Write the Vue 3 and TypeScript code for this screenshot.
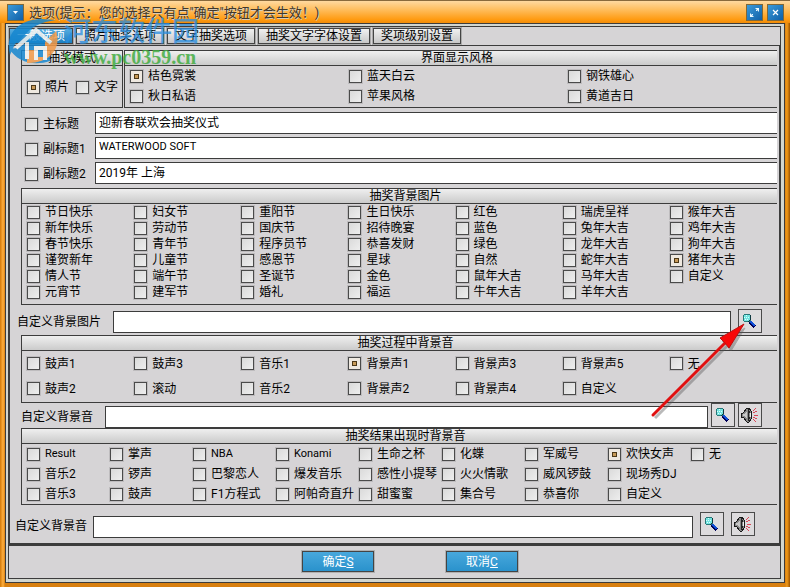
<script setup lang="ts">
import { ref } from 'vue'

interface RadioGroup {
  name: string
  title: string
  layout: string
  options: string[]
}

const tabs: string[] = ['一般选项', '照片抽奖选项', '文字抽奖选项', '抽奖文字字体设置', '奖项级别设置']
const activeTab = ref(0)

const modes: string[] = ['照片', '文字']
const styles: string[] = ['桔色霓裳', '蓝天白云', '钢铁雄心', '秋日私语', '苹果风格', '黄道吉日']

const titles = ref([
  { id: 'main', label: '主标题', value: '迎新春联欢会抽奖仪式', shown: false },
  { id: 'sub1', label: '副标题1', value: 'WATERWOOD SOFT', shown: false },
  { id: 'sub2', label: '副标题2', value: '2019年 上海', shown: false },
])

const sections: (RadioGroup & { custom: string; sound: boolean })[] = [
  {
    name: 'picture', title: '抽奖背景图片', layout: 'pictures', custom: '自定义背景图片', sound: false,
    options: [
      '节日快乐', '新年快乐', '春节快乐', '谨贺新年', '情人节', '元宵节',
      '妇女节', '劳动节', '青年节', '儿童节', '端午节', '建军节',
      '重阳节', '国庆节', '程序员节', '感恩节', '圣诞节', '婚礼',
      '生日快乐', '招待晚宴', '恭喜发财', '星球', '金色', '福运',
      '红色', '蓝色', '绿色', '自然', '鼠年大吉', '牛年大吉',
      '瑞虎呈祥', '兔年大吉', '龙年大吉', '蛇年大吉', '马年大吉', '羊年大吉',
      '猴年大吉', '鸡年大吉', '狗年大吉', '猪年大吉', '自定义',
    ],
  },
  {
    name: 'process', title: '抽奖过程中背景音', layout: 'process', custom: '自定义背景音', sound: true,
    options: [
      '鼓声1', '鼓声2', '鼓声3', '滚动', '音乐1', '音乐2', '背景声1', '背景声2',
      '背景声3', '背景声4', '背景声5', '自定义', '无',
    ],
  },
  {
    name: 'result', title: '抽奖结果出现时背景音', layout: 'result', custom: '自定义背景音', sound: true,
    options: [
      'Result', '音乐2', '音乐3', '掌声', '锣声', '鼓声', 'NBA', '巴黎恋人', 'F1方程式',
      'Konami', '爆发音乐', '阿帕奇直升', '生命之杯', '感性小提琴', '甜蜜蜜',
      '化蝶', '火火情歌', '集合号', '军威号', '威风锣鼓', '恭喜你',
      '欢快女声', '现场秀DJ', '自定义', '无',
    ],
  },
]

const mode = ref('照片')
const skin = ref('桔色霓裳')
const chosen = ref<Record<string, string>>({ picture: '猪年大吉', process: '背景声1', result: '欢快女声' })
const customPath = ref<Record<string, string>>({ picture: '', process: '', result: '' })

const isLatin = (s: string): boolean => /^[\x20-\x7e]+$/.test(s)
</script>

<template>
  <main class="window">
    <header class="titlebar">
      <button class="sys" aria-label="系统菜单">
        <svg viewBox="0 0 15 15"><path d="M5 6h5L7.500 9z" fill="#fff" /></svg>
      </button>
      <h1>选项(提示：您的选择只有点"确定"按钮才会生效！)</h1>
      <button class="sys" aria-label="最大化">
        <svg viewBox="0 0 15 15" fill="#e8f8ff"><path d="M8 3h4v4zM3 8v4h4z" /><path d="M9 6l2-2M4 11l2-2" stroke="#e8f8ff" /></svg>
      </button>
      <button class="sys" aria-label="关闭">
        <svg viewBox="0 0 15 15"><path d="M5 5l5 5M10 5l-5 5" stroke="#fff" stroke-width="1.200" /></svg>
      </button>
    </header>

    <div class="frame">
      <nav class="tabs">
        <button v-for="(tab, i) in tabs" :key="tab" :class="{ active: i === activeTab }" @click="activeTab = i">{{ tab }}</button>
      </nav>

      <div class="page">
        <div class="top">
          <section class="group modes" aria-label="抽奖模式">
            <h2>抽奖模式</h2>
            <div class="mode-options">
              <label v-for="m in modes" :key="m"><input v-model="mode" type="radio" name="mode" :value="m" />{{ m }}</label>
            </div>
          </section>
          <section class="group open skins" aria-label="界面显示风格">
            <h2>界面显示风格</h2>
            <div class="options">
              <label v-for="s in styles" :key="s"><input v-model="skin" type="radio" name="skin" :value="s" />{{ s }}</label>
            </div>
          </section>
        </div>

        <div class="titles">
          <div v-for="t in titles" :key="t.id" class="title-row">
            <label><input v-model="t.shown" type="checkbox" />{{ t.label }}</label>
            <input v-model="t.value" class="field" :class="{ latin: isLatin(t.value) }" type="text" :aria-label="t.label" />
          </div>
        </div>

        <template v-for="s in sections" :key="s.name">
          <section class="group open" :class="s.layout" :aria-label="s.title">
            <h2>{{ s.title }}</h2>
            <div class="options">
              <label v-for="o in s.options" :key="o" :class="{ latin: isLatin(o) }">
                <input v-model="chosen[s.name]" type="radio" :name="s.name" :value="o" />{{ o }}
              </label>
            </div>
          </section>
          <div class="custom" :class="'custom-' + s.name">
            <label :for="'path-' + s.name">{{ s.custom }}</label>
            <input :id="'path-' + s.name" v-model="customPath[s.name]" class="field" type="text" />
            <button class="tool" aria-label="浏览">
              <svg viewBox="0 0 20 20">
                <path d="M11 11l5 5" stroke="#000058" stroke-width="4" />
                <path d="M11 10l5 5" stroke="#1050d8" stroke-width="2" />
                <circle cx="8" cy="7" r="4" fill="#74e4e0" stroke="#287878" />
                <path d="M5 6h1M7 4h1M7 6h1M9 6h1M6 8h1M8 8h1" stroke="#d8ffff" />
                <path d="M11 4v5l-2 2" fill="none" stroke="#103840" />
              </svg>
            </button>
            <button v-if="s.sound" class="tool" aria-label="试听">
              <svg viewBox="0 0 20 20">
                <path d="M2 8h2l4-5h2l2 3v8l-2 3H8l-4-5H2z" fill="#888" stroke="#181818" />
                <path d="M4 9h2l2-3v8l-2-3H4z" fill="#c8c8c8" />
                <path d="M9 4v12M11 6c-2 2-2 6 0 8" fill="none" stroke="#222" />
                <path d="M11 8v4" stroke="#eee" />
                <path d="M14 6l3-3M14 8l4-2M15 10h4M14 12l4 2M14 14l3 3" stroke="#d84858" />
              </svg>
            </button>
          </div>
        </template>
      </div>

      <footer>
        <button>确定<u>S</u></button>
        <button>取消<u>C</u></button>
      </footer>
    </div>

    <svg class="arrow" viewBox="0 0 100 100" aria-hidden="true">
      <g class="shadow">
        <path d="M4 95L76 23" stroke-width="3" />
        <path d="M94 5L80 28L76 23L71 18z" />
      </g>
      <path d="M4 95L78 21" stroke="#e01010" stroke-width="3" stroke-linecap="round" />
      <path d="M95 4L80 28L76 23L71 18z" fill="#f80808" stroke="#c01010" />
    </svg>

    <div class="watermark" aria-hidden="true">
      <svg viewBox="0 0 54 50">
        <path d="M3 38C-3 15 14 2 35 2L49 3C34 5 24 10 18 18L8 27z" fill="#1687d0" />
        <path d="M2 31C10 34 22 25 31 15L43 26V44C28 49 10 46 2 31z" fill="#1687d0" />
        <path d="M49 14C55 31 43 47 20 46L20 33H30L31 40H38V25z" fill="#f39a48" />
        <path d="M9 31L29 13L44 26M20 25V42M29 43V31H38V43" fill="none" stroke="#f3f3f0" stroke-width="4" />
      </svg>
      <div>
        <p class="brand">河东软件园</p>
        <p class="site">www.pc0359.cn</p>
      </div>
    </div>
  </main>
</template>

<style>
body {
  margin: 0;
}
</style>

<style scoped>
* {
  box-sizing: border-box;
}

.window {
  position: relative;
  display: flex;
  flex-direction: column;
  min-height: 100vh;
  padding: 0 5px 4px;
  border-top: 1px solid #8a6a3c;
  background: linear-gradient(90deg, #d07808, #ffb040 3px, #d88010 5px, #d88010 calc(100% - 5px), #f09a18 calc(100% - 3px), #9a5200);
  color: #000;
  font: 12px/14px Roboto, "Noto Sans CJK SC", sans-serif;
}

button,
input {
  margin: 0;
  padding: 0;
  border-radius: 0;
  font: inherit;
  color: inherit;
}

h1,
h2,
p {
  margin: 0;
  font-weight: normal;
}

label {
  display: flex;
  align-items: center;
  gap: 5px;
  white-space: nowrap;
}

.titlebar {
  display: flex;
  align-items: center;
  gap: 6px;
  height: 22px;
  margin: 0 -5px;
  padding: 0 7px 0 8px;
  background: linear-gradient(#ffd9a0, #ffbd5c 40%, #ff9a10 85%, #f08c08);
}

.titlebar h1 {
  flex: 1;
  padding-top: 2px;
  font-size: 13px;
  line-height: 18px;
  color: #40382c;
  text-shadow: 1px 1px 0 #d8ccb8;
  white-space: nowrap;
}

.sys {
  width: 15px;
  height: 15px;
  border: 0;
  outline: 1px solid #806838;
  background: linear-gradient(135deg, #3c9ad8, #1060a8);
}

.sys svg {
  display: block;
}

.frame {
  flex: 1;
  display: flex;
  flex-direction: column;
  padding: 2px 3px 3px 2px;
  border: 1px solid #3c3c3c;
  background: #d2d6d0;
}

.tabs {
  display: flex;
  gap: 3px;
  height: 20px;
  padding: 1px 0 1px 1px;
  border: 1px solid #3c3c3c;
  border-left: 0;
  background: #d6d4d6;
}

.tabs button {
  height: 16px;
  padding: 0 7px;
  border: 1px solid #444;
  outline: 1px solid #aaa;
  background: linear-gradient(#f0f0f0, #c8c8c8);
  line-height: 14px;
  white-space: nowrap;
}

.tabs button.active {
  background: linear-gradient(#55ace0, #1c7fc0);
  color: #fff;
}

.page {
  flex: 1;
  padding: 4px 0 0;
  border: solid #3c3c3c;
  border-width: 0 2px 3px;
  background: #d6d4d6;
}

.top {
  display: flex;
  gap: 1px;
  margin: 0 2px 4px 11px;
}

.group {
  border: 1px solid #3c3c3c;
}

.group.open {
  border-right: 0;
}

.page > .group {
  margin: 0 2px 0 11px;
}

.group h2 {
  height: 15px;
  border-bottom: 1px solid #3c3c3c;
  background: linear-gradient(#efefef, #cbcbcb);
  font-size: 12px;
  line-height: 14px;
  text-align: center;
}

.group.open h2 {
  padding-left: 12px;
}

.modes {
  width: 102px;
}

.skins {
  flex: 1;
}

.mode-options {
  display: flex;
  justify-content: space-between;
  padding: 14px 4px 0 5px;
}

.latin {
  font-size: 11px;
}

input[type="radio"],
input[type="checkbox"] {
  flex: none;
  appearance: none;
  width: 13px;
  height: 13px;
  border: 1px solid #4a4a4a;
  outline: 1px solid #bebcbe;
  background: linear-gradient(135deg, #dadada, #eeeeee);
}

input[type="radio"]:checked,
input[type="checkbox"]:checked {
  background: linear-gradient(#c89a58, #c89a58) center / 3px 3px no-repeat, linear-gradient(#4c3818, #4c3818) center / 5px 5px no-repeat, #eee8e0;
}

.options {
  display: grid;
}

.skins .options {
  grid-template-columns: 219fr 219fr 209fr;
  grid-auto-rows: 20px;
  padding: 0 0 1px 5px;
}

.pictures .options {
  grid: repeat(6, 16px) / auto-flow 1fr;
  padding: 0 0 4px 5px;
}

.process .options {
  grid: repeat(2, 25px) / auto-flow 1fr;
  padding: 0 0 1px 5px;
}

.result .options {
  grid: repeat(3, 20px) / auto-flow 1fr;
  padding: 0 3px 0 5px;
}

.options label {
  min-width: 0;
}

.titles {
  display: grid;
  gap: 3px;
  margin: 0 2px 4px 15px;
}

.title-row {
  display: grid;
  grid-template-columns: 70px 1fr;
}

.title-row label {
  padding-top: 2px;
}

.field {
  min-width: 0;
  height: 22px;
  padding: 0 3px 3px;
  border: 1px solid #3c3c3c;
  background: #fff;
}

.title-row .field {
  border-right: 0;
}

.custom {
  display: flex;
  gap: 7px;
}

.custom .field {
  flex: 1;
  align-self: flex-end;
}

.custom label {
  flex: none;
  margin-right: -7px;
  padding-top: 2px;
}

.custom-picture {
  padding: 4px 17px 2px 7px;
}

.custom-picture label {
  width: 96px;
}

.custom-process {
  gap: 3px;
  height: 25px;
  padding: 0 17px 0 11px;
}

.custom-process label {
  width: 84px;
  margin-right: -3px;
}

.custom-result {
  height: 38px;
  padding: 7px 24px 5px 5px;
}

.custom-result label {
  width: 78px;
}

.tool {
  flex: none;
  width: 24px;
  height: 24px;
  border: 1px solid #4a4a4a;
  background: #dddbdd;
}

.tool svg {
  display: block;
  width: 20px;
  height: 20px;
  shape-rendering: crispEdges;
}

footer {
  display: flex;
  justify-content: center;
  gap: 72px;
  padding: 5px 0 6px 31px;
  border: solid #3c3c3c;
  border-width: 0 1px 1px;
  background: #d6d4d6;
}

footer button {
  width: 72px;
  height: 21px;
  border: 1px solid #444;
  outline: 1px solid #b0b0b0;
  background: linear-gradient(#48a8dc, #2a92cc);
  color: #fff;
}

.arrow {
  position: absolute;
  top: 319px;
  right: 41px;
  width: 100px;
  height: 100px;
  pointer-events: none;
}

.shadow {
  fill: #555;
  stroke: #555;
  opacity: 0.4;
  transform: translate(2px, 3px);
}

.watermark {
  position: absolute;
  top: 16px;
  left: 7px;
  display: flex;
  gap: 3px;
  pointer-events: none;
  opacity: 0.85;
}

.watermark svg {
  width: 54px;
  height: 50px;
}

.brand {
  color: #2b8fe0;
  font-size: 27px;
  font-weight: 500;
  line-height: 30px;
  opacity: 0.9;
}

.site {
  color: #45ae45;
  font: bold 20px/20px "Liberation Serif", serif;
}
</style>
